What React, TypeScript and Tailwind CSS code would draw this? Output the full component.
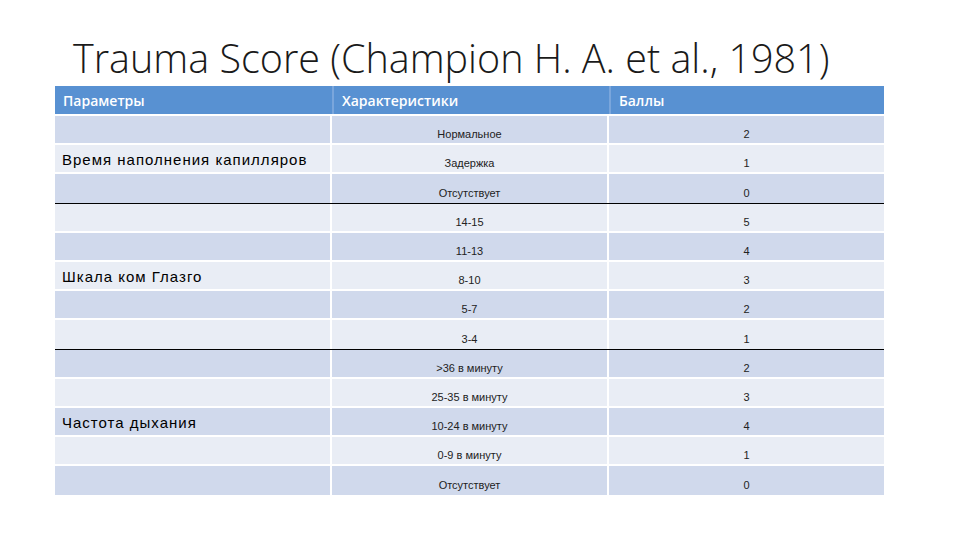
const groups = [
  {
    name: 'Время наполнения капилляров',
    at: 1,
    rows: [
      ['Нормальное', '2'],
      ['Задержка', '1'],
      ['Отсутствует', '0'],
    ],
  },
  {
    name: 'Шкала ком Глазго',
    at: 2,
    rows: [
      ['14-15', '5'],
      ['11-13', '4'],
      ['8-10', '3'],
      ['5-7', '2'],
      ['3-4', '1'],
    ],
  },
  {
    name: 'Частота дыхания',
    at: 2,
    rows: [
      ['>36 в минуту', '2'],
      ['25-35 в минуту', '3'],
      ['10-24 в минуту', '4'],
      ['0-9 в минуту', '1'],
      ['Отсутствует', '0'],
    ],
  },
];

export default function App() {
  let n = 0;
  return (
    <div className="w-[960px] h-[540px] bg-white overflow-hidden relative">
      <h1
        className="pl-[73px] pt-[34px] text-[39.5px] leading-[48px] font-light text-[#1a1a1a]"
        style={{ fontFamily: '"Open Sans", "Liberation Sans", sans-serif' }}
      >
        Trauma Score (Champion H. A. et al., 1981)
      </h1>
      <div className="ml-[55px] mt-[4px] w-[829px]">
        <div
          className="grid grid-cols-3 gap-x-[2px] h-[28px] bg-[#5891d2] text-white text-[14px] font-semibold"
          style={{ fontFamily: '"Open Sans", "Liberation Sans", sans-serif' }}
        >
          <div className="pl-[8px] flex items-center">Параметры</div>
          <div className="pl-[8px] flex items-center border-l-2 border-[#7aa6dc]">Характеристики</div>
          <div className="pl-[8px] flex items-center border-l-2 border-[#7aa6dc]">Баллы</div>
        </div>
        <div className="h-[2px]" />
        {groups.map((g, gi) => (
          <div key={gi} className={gi < groups.length - 1 ? 'border-b border-black' : ''}>
            {g.rows.map((r, ri) => {
              const dark = n % 2 === 0;
              n++;
              const bg = dark ? 'bg-[#d0d9ec]' : 'bg-[#e9edf5]';
              return (
                <div
                  key={ri}
                  className={`grid grid-cols-3 gap-x-[2px] h-[29px] ${ri < g.rows.length - 1 ? 'border-b-2 border-white' : ''}`}
                >
                  <div
                    className={`${bg} pl-[7px] pt-[3px] flex items-center text-[15px] tracking-[1px] text-black`}
                    style={{ fontFamily: '"Liberation Sans", Arial, sans-serif' }}
                  >
                    {ri === g.at ? g.name : ''}
                  </div>
                  <div
                    className={`${bg} flex items-center justify-center pt-[10px] text-[11px] text-[#222]`}
                    style={{ fontFamily: '"Liberation Sans", Arial, sans-serif' }}
                  >
                    {r[0]}
                  </div>
                  <div
                    className={`${bg} flex items-center justify-center pt-[10px] text-[11px] text-[#222]`}
                    style={{ fontFamily: '"Liberation Sans", Arial, sans-serif' }}
                  >
                    {r[1]}
                  </div>
                </div>
              );
            })}
          </div>
        ))}
      </div>
    </div>
  );
}
